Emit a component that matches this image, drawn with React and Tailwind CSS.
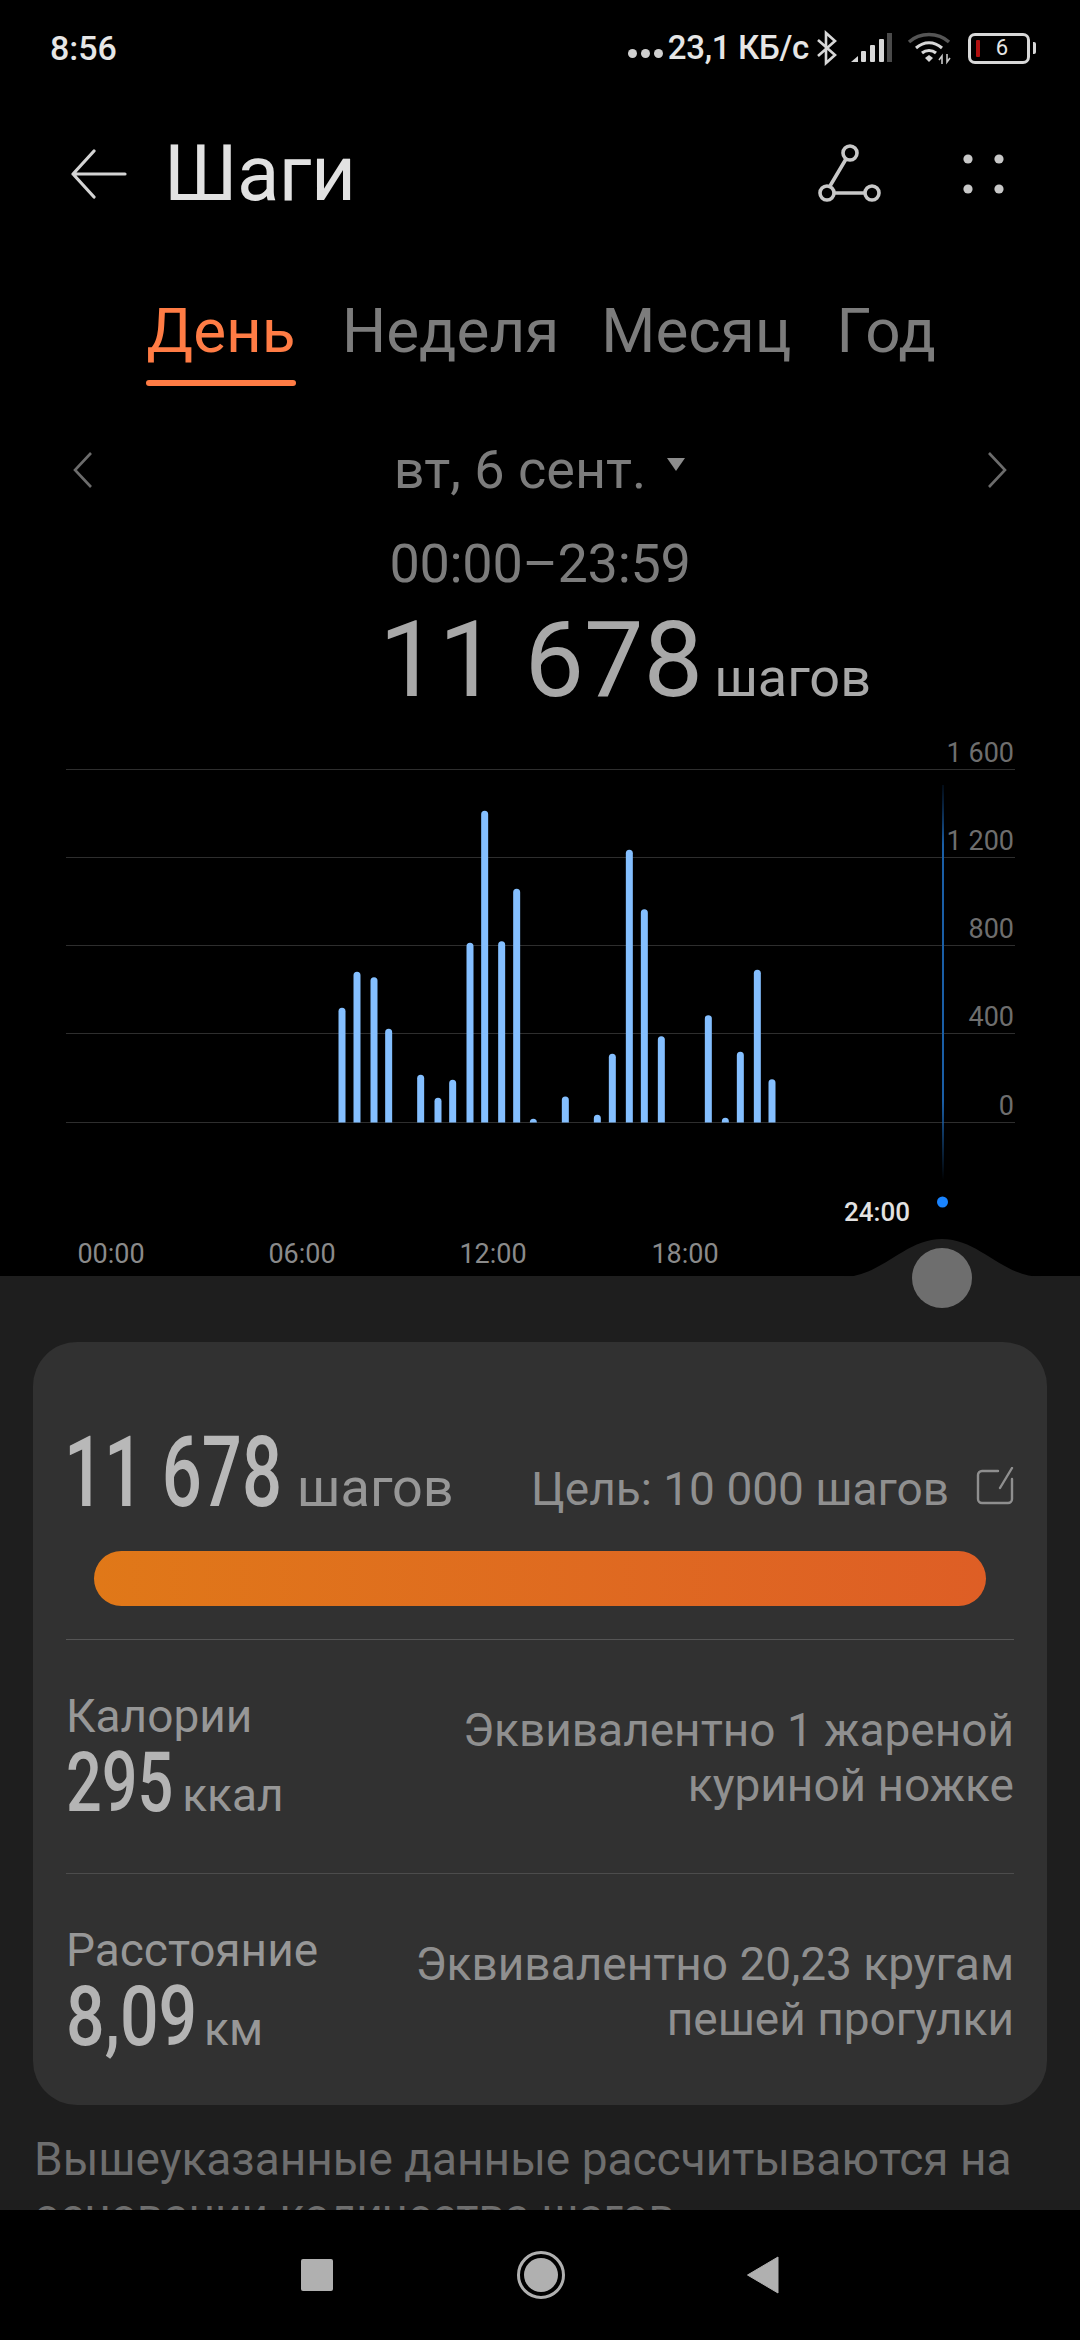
import React from 'react';

const BARS = [
  [126, 745], [171, 637], [222, 653], [266, 808], [362, 946], [414, 1015], [458, 961], [510, 550],
  [554, 154], [605, 545], [650, 388], [700, 1078], [796, 1011], [892, 1066], [937, 883], [988, 271],
  [1033, 449], [1084, 830], [1225, 767], [1276, 1075], [1321, 877], [1372, 631], [1416, 959],
];

const GRID = [
  { y: 769, label: '1 600' },
  { y: 857, label: '1 200' },
  { y: 945, label: '800' },
  { y: 1033, label: '400' },
  { y: 1122, label: '0' },
];

const StatusBar = () => (
  <div className="flex h-[96px] shrink-0 items-center justify-between pl-[50px] pr-[44px] text-[34px] font-medium text-[#e6e6e6]">
    <span>8:56</span>
    <div className="flex items-center">
      <span className="mr-[5px] mt-[10px] flex gap-[4px]">
        <i className="h-[9px] w-[9px] rounded-full bg-[#d0d0d0]" />
        <i className="h-[9px] w-[9px] rounded-full bg-[#d0d0d0]" />
        <i className="h-[9px] w-[9px] rounded-full bg-[#d0d0d0]" />
      </span>
      <span className="text-[33px] tracking-[-0.3px]">23,1 КБ/с</span>
      <svg width="20" height="36" viewBox="2 0 20 36" className="ml-[8px]" fill="none" stroke="#d8d8d8" strokeWidth="2.6">
        <path d="M3 10 20 25 11 33V3l9 8L3 26" />
      </svg>
      <svg width="42" height="32" viewBox="0 0 42 32" className="ml-[13px]">
        <path d="M1 30 8 24V30Z" fill="#d8d8d8" />
        <rect x="11" y="19" width="5" height="11" rx="1" fill="#d8d8d8" />
        <rect x="20" y="13" width="5" height="17" rx="1" fill="#d8d8d8" />
        <rect x="29" y="7" width="5" height="23" rx="1" fill="#d8d8d8" />
        <rect x="37" y="1" width="5" height="29" fill="#4a4a4a" />
      </svg>
      <svg width="46" height="34" viewBox="0 0 46 34" className="ml-[15px]" fill="none">
        <path d="M2 11C13 1 31 1 42 11" stroke="#555" strokeWidth="3.4" />
        <path d="M9 17C17 10 27 10 35 17M15 22C19 18.500 25 18.500 29 22" stroke="#d8d8d8" strokeWidth="3" />
        <path d="M18 27 22 24 26 27 22 31Z" fill="#d8d8d8" />
        <path d="M35 33V25L32 29M40 23V31L43 27" stroke="#c8c8c8" strokeWidth="1.6" />
      </svg>
      <div className="relative ml-[15px] flex h-[31px] w-[62px] items-center justify-center rounded-[7px] border-[3px] border-[#d8d8d8] text-[22px] font-normal leading-none">
        <span className="absolute left-[5px] top-[4px] h-[17px] w-[4px] rounded-[1px] bg-[#b01010]" />
        <span className="ml-[6px]">6</span>
      </div>
      <span className="ml-[3px] h-[12px] w-[3px] rounded-r-[2px] bg-[#d8d8d8]" />
    </div>
  </div>
);

const Header = () => (
  <div className="flex h-[156px] shrink-0 items-center">
    <svg width="56" height="50" viewBox="0 0 56 50" className="ml-[71px]" fill="none" stroke="#d4d4d4" strokeWidth="3.2" strokeLinecap="round" strokeLinejoin="round">
      <path d="M23 2 2 25 23 48M2 25H54" />
    </svg>
    <h1 className="ml-[37px] w-[190px] text-[78px] font-normal leading-none tracking-[-0.5px] text-[#e2e2e2]">Шаги</h1>
    <svg width="64" height="60" viewBox="0 0 64 60" className="ml-[464px]" fill="none" stroke="#c8c8c8" strokeWidth="3.6">
      <circle cx="32" cy="9" r="7" />
      <circle cx="9" cy="49" r="7" />
      <circle cx="54" cy="49" r="7" />
      <path d="M28 15 12 42M16 49H47" />
    </svg>
    <svg width="42" height="40" viewBox="0 0 42 40" className="ml-[81px]" fill="#c8c8c8">
      <circle cx="5" cy="5" r="4.600" />
      <circle cx="36" cy="5" r="4.600" />
      <circle cx="5" cy="35" r="4.600" />
      <circle cx="36" cy="35" r="4.600" />
    </svg>
  </div>
);

const Tabs = () => (
  <div className="flex h-[177px] shrink-0 pl-[146px] text-[62px] leading-none text-[#7c7c7c]">
    <div className="flex w-[150px] flex-col items-center">
      <span className="mt-[48px] text-[#ff7c45]">День</span>
      <span className="mt-[18px] h-[6px] w-full rounded-full bg-[#ff7c45]" />
    </div>
    <span className="ml-[46px] mt-[48px]">Неделя</span>
    <span className="ml-[42px] mt-[48px]">Месяц</span>
    <span className="ml-[45px] mt-[48px]">Год</span>
  </div>
);

const Summary = () => (
  <div className="flex shrink-0 flex-col items-center">
    <div className="flex h-[82px] w-full items-center justify-between px-[73px] text-[#7c7c7c]">
      <svg width="20" height="36" viewBox="0 0 20 36" fill="none" stroke="#6c6c6c" strokeWidth="2.6">
        <path d="M18 1 2 18 18 35" />
      </svg>
      <div className="flex items-center text-[54px] leading-none">
        <span>вт, 6 сент.</span>
        <svg width="20" height="15" viewBox="0 0 20 15" className="mb-[12px] ml-[20px]" fill="#8c8c8c">
          <path d="M1 1H19L10 14Z" />
        </svg>
      </div>
      <svg width="20" height="36" viewBox="0 0 20 36" fill="none" stroke="#6c6c6c" strokeWidth="2.6">
        <path d="M2 1 18 18 2 35" />
      </svg>
    </div>
    <div className="mt-[26px] text-[54px] leading-none tracking-[-0.3px] text-[#7c7c7c]">00:00–23:59</div>
    <div className="ml-[170px] mt-[21px] flex items-baseline text-[#a8a8a8]">
      <span className="text-[106px] font-normal leading-[96px]">11 678</span>
      <span className="ml-[11px] text-[54px] leading-none">шагов</span>
    </div>
  </div>
);

const Chart = () => (
  <div className="mt-[18px] h-[550px] shrink-0">
    <svg width="1080" height="550" viewBox="0 726 1080 550" className="block">
      <defs>
        <linearGradient id="cursor" x1="0" y1="0" x2="0" y2="1">
          <stop offset="0" stopColor="#0f3d73" stopOpacity="0.2" />
          <stop offset="0.15" stopColor="#1a5ea6" />
          <stop offset="0.8" stopColor="#1a5ea6" />
          <stop offset="1" stopColor="#1a5ea6" stopOpacity="0" />
        </linearGradient>
      </defs>
      {GRID.map((g) => (
        <g key={g.y}>
          <line x1="66" x2="1015" y1={g.y + 0.5} y2={g.y + 0.5} stroke="#2e2e2e" strokeWidth="1" />
          <text x="1014" y={g.y - 7} textAnchor="end" fontSize="27" fill="#6e6e6e" fontFamily="Roboto, sans-serif">{g.label}</text>
        </g>
      ))}
      <rect x="942" y="785" width="2" height="395" fill="url(#cursor)" />
      {BARS.map(([x, top]) => {
        const y = 760 + top / 3;
        return <path key={x} d={`M${300 + x / 3 - 3.5} 1122.500V${y + 3}a3.500 3.500 0 0 1 7 0V1122.500Z`} fill="#84bfff" />;
      })}
      <circle cx="942.500" cy="1202" r="5.500" fill="#1a84ff" />
      <text x="877" y="1221" textAnchor="middle" fontSize="26" fontWeight="500" fill="#e2e2e2" fontFamily="Roboto, sans-serif">24:00</text>
      {[['00:00', 111], ['06:00', 302], ['12:00', 493], ['18:00', 685]].map(([t, x]) => (
        <text key={t} x={x} y="1263" textAnchor="middle" fontSize="27" fill="#8a8a8a" fontFamily="Roboto, sans-serif">{t}</text>
      ))}
    </svg>
  </div>
);

const Metric = ({ title, value, unit, valueClass, unitClass, line1, line2 }) => (
  <div className="flex h-[233px] items-center justify-between">
    <div className="mt-[-1px]">
      <div className="text-[46px] leading-[48px] text-[#979797]">{title}</div>
      <div className="mt-[5px] flex h-[76px] items-baseline">
        <span className={`origin-left text-[84px] font-medium leading-[76px] text-[#b4b4b4] ${valueClass}`}>{value}</span>
        <span className={`text-[46px] leading-none text-[#979797] ${unitClass}`}>{unit}</span>
      </div>
    </div>
    <div className="mt-[3px] text-right text-[46px] leading-[55px] text-[#8f8f8f]">
      <div>{line1}</div>
      <div>{line2}</div>
    </div>
  </div>
);

const Sheet = () => (
  <div className="relative min-h-0 flex-1 bg-[#1e1e1e] px-[33px] pt-[66px]">
    {/* hump behind the drag handle */}
    <svg width="200" height="38" viewBox="0 0 200 38" className="absolute left-[842px] top-[-37px]">
      <path d="M0 38C40 38 62 0 100 0S160 38 200 38Z" fill="#1e1e1e" />
    </svg>
    <div className="absolute left-[912px] top-[-28px] h-[60px] w-[60px] rounded-full bg-[#6e6e6e]" />

    <div className="h-[763px] rounded-[44px] bg-[#313131] px-[33px]">
      <div className="flex h-[190px] items-end justify-between pb-[13px]">
        <div className="ml-[-2px] flex items-baseline">
          <span className="origin-left scale-x-[0.72] text-[98px] font-medium leading-[92px] text-[#b8b8b8]">11 678</span>
          <span className="ml-[-70px] text-[54px] leading-none text-[#979797]">шагов</span>
        </div>
        <div className="mb-[7px] flex items-center">
          <span className="text-[46px] leading-none text-[#8f8f8f]">Цель: 10 000 шагов</span>
          <svg width="38" height="38" viewBox="0 0 38 38" className="mb-[6px] ml-[27px]" fill="none" stroke="#8f8f8f" strokeWidth="2.4" strokeLinecap="round">
            <path d="M22 4H6a4 4 0 0 0-4 4v24a4 4 0 0 0 4 4h26a4 4 0 0 0 4-4V12M36 1 24 21" />
          </svg>
        </div>
      </div>
      <div className="mx-[28px] mt-[19px] h-[55px] rounded-full bg-gradient-to-r from-[#e07818] to-[#de5e25]" />
      <div className="mt-[33px] h-px bg-[#555555]" />
      <Metric title="Калории" value="295" unit="ккал" valueClass="scale-x-[0.75]" unitClass="ml-[-27px]" line1="Эквивалентно 1 жареной" line2="куриной ножке" />
      <div className="h-px bg-[#4c4c4c]" />
      <Metric title="Расстояние" value="8,09" unit="км" valueClass="scale-x-[0.81]" unitClass="ml-[-24px]" line1="Эквивалентно 20,23 кругам" line2="пешей прогулки" />
    </div>
    <p className="ml-px mt-[26px] w-[1010px] text-[46px] leading-[56px] text-[#6e6e6e]">
      Вышеуказанные данные рассчитываются на
      <br />
      основании количества шагов
    </p>
  </div>
);

const NavBar = () => (
  <div className="relative flex h-[130px] shrink-0 items-center justify-center bg-black">
    <div className="flex items-center">
      <span className="h-[32px] w-[32px] rounded-[2px] bg-[#b0b0b0]" />
      <svg width="48" height="48" viewBox="0 0 48 48" className="ml-[184px]">
        <circle cx="24" cy="24" r="22.500" fill="none" stroke="#b0b0b0" strokeWidth="3" />
        <circle cx="24" cy="24" r="17" fill="#b0b0b0" />
      </svg>
      <svg width="34" height="38" viewBox="0 0 34 38" className="ml-[181px]">
        <path d="M32 1 1.500 19 32 37Z" fill="#b0b0b0" stroke="#b0b0b0" strokeLinejoin="round" />
      </svg>
    </div>
  </div>
);

const App = () => {
  return (
    <div className="flex h-[2340px] w-[1080px] flex-col overflow-hidden bg-black font-['Roboto',sans-serif]">
      <StatusBar />
      <Header />
      <Tabs />
      <Summary />
      <Chart />
      <Sheet />
      <NavBar />
    </div>
  );
};

export default App;
